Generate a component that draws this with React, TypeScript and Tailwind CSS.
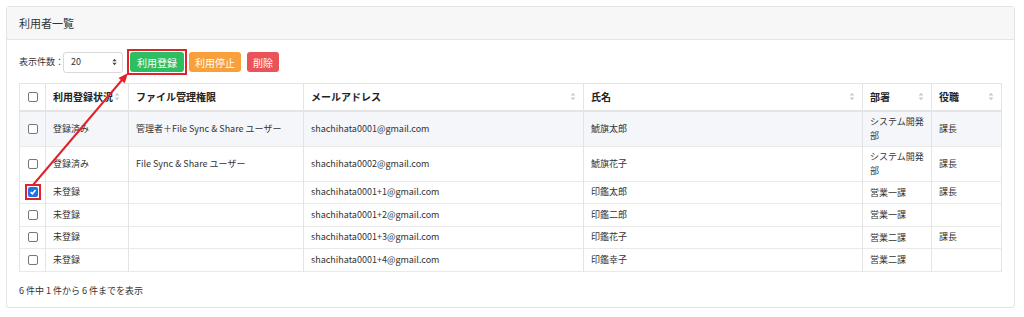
const rows = [
  { status: "登録済み", perm: "管理者＋File Sync & Share ユーザー", email: "shachihata0001@gmail.com", name: "鯱旗太郎", dept: "システム開発部", role: "課長", checked: false },
  { status: "登録済み", perm: "File Sync & Share ユーザー", email: "shachihata0002@gmail.com", name: "鯱旗花子", dept: "システム開発部", role: "課長", checked: false },
  { status: "未登録", perm: "", email: "shachihata0001+1@gmail.com", name: "印鑑太郎", dept: "営業一課", role: "課長", checked: true },
  { status: "未登録", perm: "", email: "shachihata0001+2@gmail.com", name: "印鑑二郎", dept: "営業一課", role: "", checked: false },
  { status: "未登録", perm: "", email: "shachihata0001+3@gmail.com", name: "印鑑花子", dept: "営業二課", role: "課長", checked: false },
  { status: "未登録", perm: "", email: "shachihata0001+4@gmail.com", name: "印鑑幸子", dept: "営業二課", role: "", checked: false },
];

function SortIcon() {
  return (
    <svg width="6" height="9" viewBox="0 0 6 9" className="shrink-0">
      <path d="M3 0.8 L5.3 3.6 H0.7 Z" fill="#c8c8c8" />
      <path d="M3 8.2 L5.3 5.4 H0.7 Z" fill="#c8c8c8" />
    </svg>
  );
}

function Box({ checked }: { checked?: boolean }) {
  if (checked) {
    return (
      <span className="inline-flex outline-2 outline-offset-1 outline-[#e0232b]">
        <span className="inline-flex w-[10px] h-[10px] rounded-[2px] bg-[#1a73e8] items-center justify-center">
          <svg width="8" height="8" viewBox="0 0 10 10">
            <path d="M2 5.2 L4.2 7.3 L8.2 2.6" stroke="#fff" strokeWidth="2" fill="none" />
          </svg>
        </span>
      </span>
    );
  }
  return <span className="inline-block w-[10px] h-[10px] rounded-[2px] border border-[#767676] bg-white" />;
}

export default function App() {
  return (
    <div
      className="relative w-[1024px] h-[317px] bg-white text-[#333] overflow-hidden"
      style={{ fontFamily: '"Noto Sans CJK JP", "Noto Sans", sans-serif' }}
    >
      <div className="absolute left-0 top-0 w-full h-full p-[6px] pr-[9px]">
        <div className="border border-[#e4e4e4] rounded-[3px] h-[302px]">
          {/* header */}
          <div className="h-[33px] bg-[#f7f7f7] border-b border-[#e4e4e4] px-[12px] flex items-center text-[11px] text-[#333]">
            利用者一覧
          </div>

          <div className="px-[12px] pt-[12px]">
            {/* toolbar */}
            <div className="flex items-center h-[20px] text-[9px]">
              <span className="w-[44px] whitespace-nowrap shrink-0">表示件数：</span>
              <div className="w-[60px] h-[21px] border border-[#d9d9d9] rounded-[3px] flex items-center justify-between pl-[7px] pr-[5px]">
                <span className="text-[9px]">20</span>
                <svg width="5" height="8" viewBox="0 0 6 9">
                  <path d="M3 0.5 L5.5 3.5 H0.5 Z" fill="#444" />
                  <path d="M3 8.5 L5.5 5.5 H0.5 Z" fill="#444" />
                </svg>
              </div>
              <span className="ml-[4px] inline-flex border-2 border-[#e0232b] p-px">
                <button className="h-[20px] w-[54px] rounded-[3px] bg-[#2dbe63] text-white text-[10px]">
                  利用登録
                </button>
              </span>
              <button className="ml-[2px] h-[20px] w-[52px] rounded-[3px] bg-[#f8a03c] text-white text-[10px]">
                利用停止
              </button>
              <button className="ml-[6px] h-[20px] w-[32px] rounded-[3px] bg-[#e9545a] text-white text-[10px]">
                削除
              </button>
            </div>

            {/* table */}
            <table className="mt-[11px] w-[982px] table-fixed border-collapse border border-[#e4e4e4] text-[9px]">
              <colgroup>
                <col className="w-[26px]" />
                <col className="w-[83px]" />
                <col className="w-[175px]" />
                <col className="w-[280px]" />
                <col className="w-[279px]" />
                <col className="w-[69px]" />
                <col className="w-[70px]" />
              </colgroup>
              <thead>
                <tr className="h-[27px] border-b-2 border-[#e4e4e4] text-[10px] font-bold text-[#222]">
                  <th className="border-r border-[#e4e4e4] text-center align-middle">
                    <span className="flex justify-center pt-[1px]"><Box /></span>
                  </th>
                  <th className="border-r border-[#e4e4e4] px-[7px] text-left">
                    <span className="flex items-center gap-[1px] whitespace-nowrap">利用登録状況<SortIcon /></span>
                  </th>
                  <th className="border-r border-[#e4e4e4] px-[7px] text-left">ファイル管理権限</th>
                  <th className="border-r border-[#e4e4e4] px-[7px] text-left">
                    <span className="flex items-center justify-between">メールアドレス<SortIcon /></span>
                  </th>
                  <th className="border-r border-[#e4e4e4] px-[7px] text-left">
                    <span className="flex items-center justify-between">氏名<SortIcon /></span>
                  </th>
                  <th className="border-r border-[#e4e4e4] px-[7px] text-left">
                    <span className="flex items-center justify-between">部署<SortIcon /></span>
                  </th>
                  <th className="px-[7px] text-left">
                    <span className="flex items-center justify-between">役職<SortIcon /></span>
                  </th>
                </tr>
              </thead>
              <tbody>
                {rows.map((r, i) => (
                  <tr key={i} className={`h-[22.5px] border-b border-[#e9e9e9] ${i === 0 ? "bg-[#f5f6fa]" : "bg-white"}`}>
                    <td className="border-r border-[#e4e4e4] text-center align-middle p-0 leading-[10px]">
                      <span className="flex justify-center"><Box checked={r.checked} /></span>
                    </td>
                    <td className="border-r border-[#e4e4e4] px-[7px] py-0 leading-[12px]">{r.status}</td>
                    <td className="border-r border-[#e4e4e4] px-[7px] py-0 leading-[12px] whitespace-nowrap">{r.perm}</td>
                    <td className="border-r border-[#e4e4e4] px-[7px] py-0 leading-[12px]">{r.email}</td>
                    <td className="border-r border-[#e4e4e4] px-[7px] py-0 leading-[12px]">{r.name}</td>
                    <td className="border-r border-[#e4e4e4] px-[7px] py-[3.5px] leading-[13.5px]">{r.dept}</td>
                    <td className="px-[7px] py-0 leading-[12px]">{r.role}</td>
                  </tr>
                ))}
              </tbody>
            </table>

            <div className="mt-[12px] text-[9px] text-[#333]">6 件中 1 件から 6 件までを表示</div>
          </div>
        </div>
      </div>

      {/* annotation arrow */}
      <svg className="absolute left-0 top-0 pointer-events-none" width="1024" height="317">
        <line x1="33" y1="185" x2="122" y2="80" stroke="#e0232b" strokeWidth="2" />
        <polygon points="128,73 124.7,83.2 118.5,78" fill="#e0232b" />
      </svg>
    </div>
  );
}
